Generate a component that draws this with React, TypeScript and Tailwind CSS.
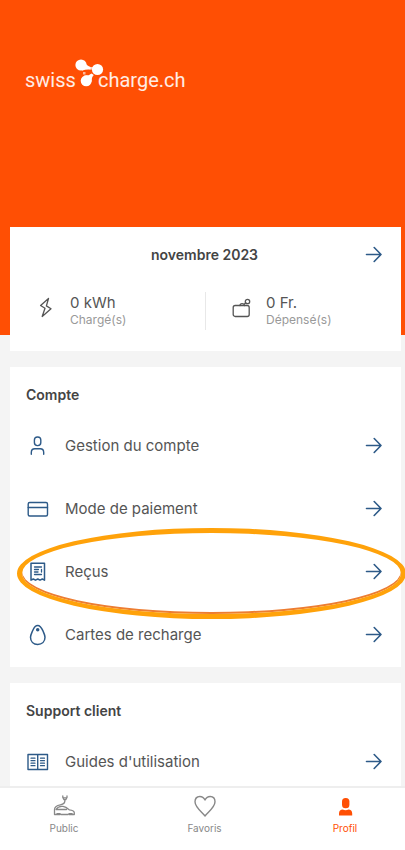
import type { ReactNode } from "react";

const stroke = {
  fill: "none",
  stroke: "currentColor",
  strokeWidth: 1.4,
  strokeLinecap: "round" as const,
  strokeLinejoin: "round" as const,
};

function ArrowIcon() {
  return (
    <svg viewBox="0 0 18 18" className="size-[18px] shrink-0 text-[#2d5a88]" {...stroke} strokeWidth={1.6} aria-hidden="true">
      <path d="M1.5 8.500H16M9.200 1.500l6.800 7-6.800 7" />
    </svg>
  );
}

function BoltIcon() {
  return (
    <svg viewBox="0 0 24 24" className="size-6 shrink-0" {...stroke} strokeWidth={1.3} aria-hidden="true">
      <path d="M14.500 4.500 6.600 11.500l4.400 2.800L8.200 22.500 17 14.800l-4.600-2.900z" />
    </svg>
  );
}

function PurseIcon() {
  return (
    <svg viewBox="0 0 24 24" className="size-6 shrink-0" {...stroke} strokeWidth={1.300} aria-hidden="true">
      <rect x="3.200" y="11.500" width="16" height="11" rx="2" />
      <path d="M10 11.500C10 9 14 9 14.500 11.500" />
      <circle cx="17.500" cy="7.500" r="2.200" />
      <path d="m14.500 10 1.200-1.200" />
    </svg>
  );
}

function UserIcon() {
  return (
    <svg viewBox="0 0 24 24" className="size-6" {...stroke} aria-hidden="true">
      <rect x="8.400" y="3" width="6.400" height="8.600" rx="3.100" />
      <path d="M5.300 20.200v-1.700c0-2.200 1.500-3.700 3.500-3.700h5.400c2 0 3.500 1.500 3.500 3.700v1.700" />
    </svg>
  );
}

function CardIcon() {
  return (
    <svg viewBox="0 0 24 24" className="size-6" {...stroke} aria-hidden="true">
      <rect x="2.200" y="5.500" width="19.300" height="13.500" rx="1.500" />
      <path d="M2.200 10.500h19.300" />
    </svg>
  );
}

function ReceiptIcon() {
  return (
    <svg viewBox="0 0 24 24" className="size-6" {...stroke} strokeWidth={1.500} aria-hidden="true">
      <path d="M5 3.200h13.500v17l-2.200-1.200-2.300 1.200-2.200-1.200-2.300 1.200-2.200-1.200L5 20.200z" />
      <path d="M8.500 7h7M8.500 9.500h4M8.500 12h3.500M15.500 9.500v2.500M8.500 14.500h7" strokeWidth="1.300" />
    </svg>
  );
}

function FobIcon() {
  return (
    <svg viewBox="0 0 24 24" className="size-6" {...stroke} strokeWidth={1.500} aria-hidden="true">
      <path d="M11.700 2.500c3 0 4.100 2.800 5.300 5.500 1 2.300 2 4.100 2 6.300 0 4.400-3.100 7.200-7.300 7.200s-7.200-2.800-7.200-7.200c0-2.200 1-4 2-6.300 1.200-2.700 2.200-5.500 5.200-5.500z" />
      <circle cx="11.700" cy="6.800" r="1" fill="currentColor" />
    </svg>
  );
}

function BookIcon() {
  return (
    <svg viewBox="0 0 24 24" className="size-6" {...stroke} aria-hidden="true">
      <path d="M2 4.500h19.500v15H2zM11.700 4.500v15" />
      <path d="M5 8.200h4M5 10.700h4M5 13.200h4M5 15.700h4M14.500 8.200h4M14.500 10.700h4M14.500 13.200h4M14.500 15.700h4" strokeWidth="1.200" />
    </svg>
  );
}

function CarIcon() {
  return (
    <svg viewBox="0 0 24 24" className="size-6" {...stroke} strokeWidth={1.300} aria-hidden="true">
      <path d="M10.800 2v1.500l1.200 2.200h1.800L15 3.500V2M11.500 3.800h3" />
      <path d="M12.900 5.700c.3 3-1 4.500-4.500 5.100-3 .5-5.900 1.700-5.900 5v4.700h2" />
      <path d="M4 15.500c1.500-2.500 4-3.500 7-3.100 3 .4 4.500 1.800 6.300 3.400 3 .3 5 1.200 5 3v1.700h-2M9 20.500h7M4.500 15.500h10" />
      <path d="M5.300 20.200h2.600M17.200 20.200h2.600" strokeWidth="2.200" />
    </svg>
  );
}

function HeartIcon() {
  return (
    <svg viewBox="0 0 24 24" className="size-6" {...stroke} aria-hidden="true">
      <path d="M12 22C9.500 18.500 2 13.500 2 7.800 2 4.500 4 2.500 6.800 2.500c2.400 0 4.100 1.300 5.200 3.500 1.100-2.200 2.800-3.500 5.200-3.500C20 2.500 22 4.500 22 7.800 22 13.500 14.500 18.500 12 22z" />
    </svg>
  );
}

function ProfileIcon() {
  return (
    <svg viewBox="0 0 24 24" className="size-6" fill="currentColor" aria-hidden="true">
      <rect x="9" y="4" width="7.400" height="10.300" rx="3.500" />
      <path d="M6 21.500v-2c0-2.300 1.500-3.900 3.800-3.900 1.600 1 4 1 5.600 0 2.300 0 3.800 1.600 3.800 3.900v2z" />
    </svg>
  );
}

function Logo() {
  return (
    <div className="flex font-['Roboto',sans-serif] text-xl leading-6 text-white/90">
      <span className="w-[51px] pt-2.5">swiss</span>
      <svg viewBox="0 0 32 32" className="-mr-2.5 size-8 shrink-0 overflow-visible" fill="white" aria-hidden="true">
        <circle cx="5" cy="7" r="5.600" />
        <circle cx="21.500" cy="11.500" r="5.600" />
        <circle cx="10.200" cy="22.800" r="5.500" />
        <path d="M8 2.500Q10 7.500 14.500 9v2.500Q10 11 6 12.500z" />
        <path d="M8 17.800Q13 18 15.500 15.500l2.300 1.500Q15.500 19 15.500 24z" />
        <path d="M13.500 9h4v2.500h-4z" opacity=".7" />
        <path d="M7 14h2.500v2.500H7z" opacity=".6" />
      </svg>
      <span className="pt-2.5">charge.ch</span>
    </div>
  );
}

function Card({ title, children }: { title: string; children: ReactNode }) {
  return (
    <section className="bg-white">
      <h2 className="px-4 pt-4 pb-2 text-sm leading-6 font-semibold text-[#444]">{title}</h2>
      <ul>{children}</ul>
    </section>
  );
}

function Row({ icon, label, highlighted = false }: { icon: ReactNode; label: string; highlighted?: boolean }) {
  return (
    <li className="relative">
      <button type="button" className="flex h-[63px] w-full items-center pr-[18px] pb-px pl-4 text-left">
        <span className="mr-[15px] text-[#2d5a88]">{icon}</span>
        <span className="flex-1 text-[15px] leading-6 text-[#555]">{label}</span>
        <ArrowIcon />
      </button>
      {highlighted && (
        <span className="pointer-events-none absolute -top-[13px] -right-[5px] left-[7px] h-[91px] rounded-[50%] border-[5px] border-[#ffa20a] shadow-[inset_0_-2px_0_#ed7d31]" />
      )}
    </li>
  );
}

function Stat({ icon, value, label }: { icon: ReactNode; value: string; label: string }) {
  return (
    <div className="flex flex-1 items-start gap-3 pl-6 text-[#555]">
      {icon}
      <div>
        <p className="text-[15px] leading-[18px]">{value}</p>
        <p className="text-xs leading-4 text-[#999]">{label}</p>
      </div>
    </div>
  );
}

function Tab({ icon, label, active = false }: { icon: ReactNode; label: string; active?: boolean }) {
  return (
    <a href="#" aria-current={active ? "page" : undefined} className={`flex w-16 flex-col items-center gap-0.5 text-[10px] leading-4 ${active ? "text-[#ff4f04]" : "text-[#888]"}`}>
      {icon}
      {label}
    </a>
  );
}

export default function App() {
  return (
    <div className="flex h-screen flex-col overflow-hidden bg-[#f4f4f4] font-['Inter',sans-serif]">
      <main className="min-h-0 flex-1 overflow-hidden">
        <header className="h-[335px] bg-[#ff4f04] px-[25px] pt-[58px]">
          <Logo />
        </header>
        <div className="-mt-[108px] flex flex-col gap-4 pr-1 pl-2.5">
          <section className="bg-white pb-3">
            <div className="flex h-14 items-center pr-[18px] pl-[34px]">
              <h1 className="flex-1 text-center text-sm font-semibold text-[#444]">novembre 2023</h1>
              <button type="button" aria-label="Détails du mois">
                <ArrowIcon />
              </button>
            </div>
            <div className="flex h-14 items-center">
              <Stat icon={<BoltIcon />} value="0 kWh" label="Chargé(s)" />
              <span className="h-[38px] w-px bg-[#e8e8e8]" />
              <Stat icon={<PurseIcon />} value="0 Fr." label="Dépensé(s)" />
            </div>
          </section>
          <Card title="Compte">
            <Row icon={<UserIcon />} label="Gestion du compte" />
            <Row icon={<CardIcon />} label="Mode de paiement" />
            <Row icon={<ReceiptIcon />} label="Reçus" highlighted />
            <Row icon={<FobIcon />} label="Cartes de recharge" />
          </Card>
          <Card title="Support client">
            <Row icon={<BookIcon />} label="Guides d'utilisation" />
          </Card>
        </div>
      </main>
      <nav className="flex h-16 shrink-0 justify-between border-t-2 border-[#eee] bg-white pt-1.5 pr-7 pl-8">
        <Tab icon={<CarIcon />} label="Public" />
        <Tab icon={<HeartIcon />} label="Favoris" />
        <Tab icon={<ProfileIcon />} label="Profil" active />
      </nav>
    </div>
  );
}
